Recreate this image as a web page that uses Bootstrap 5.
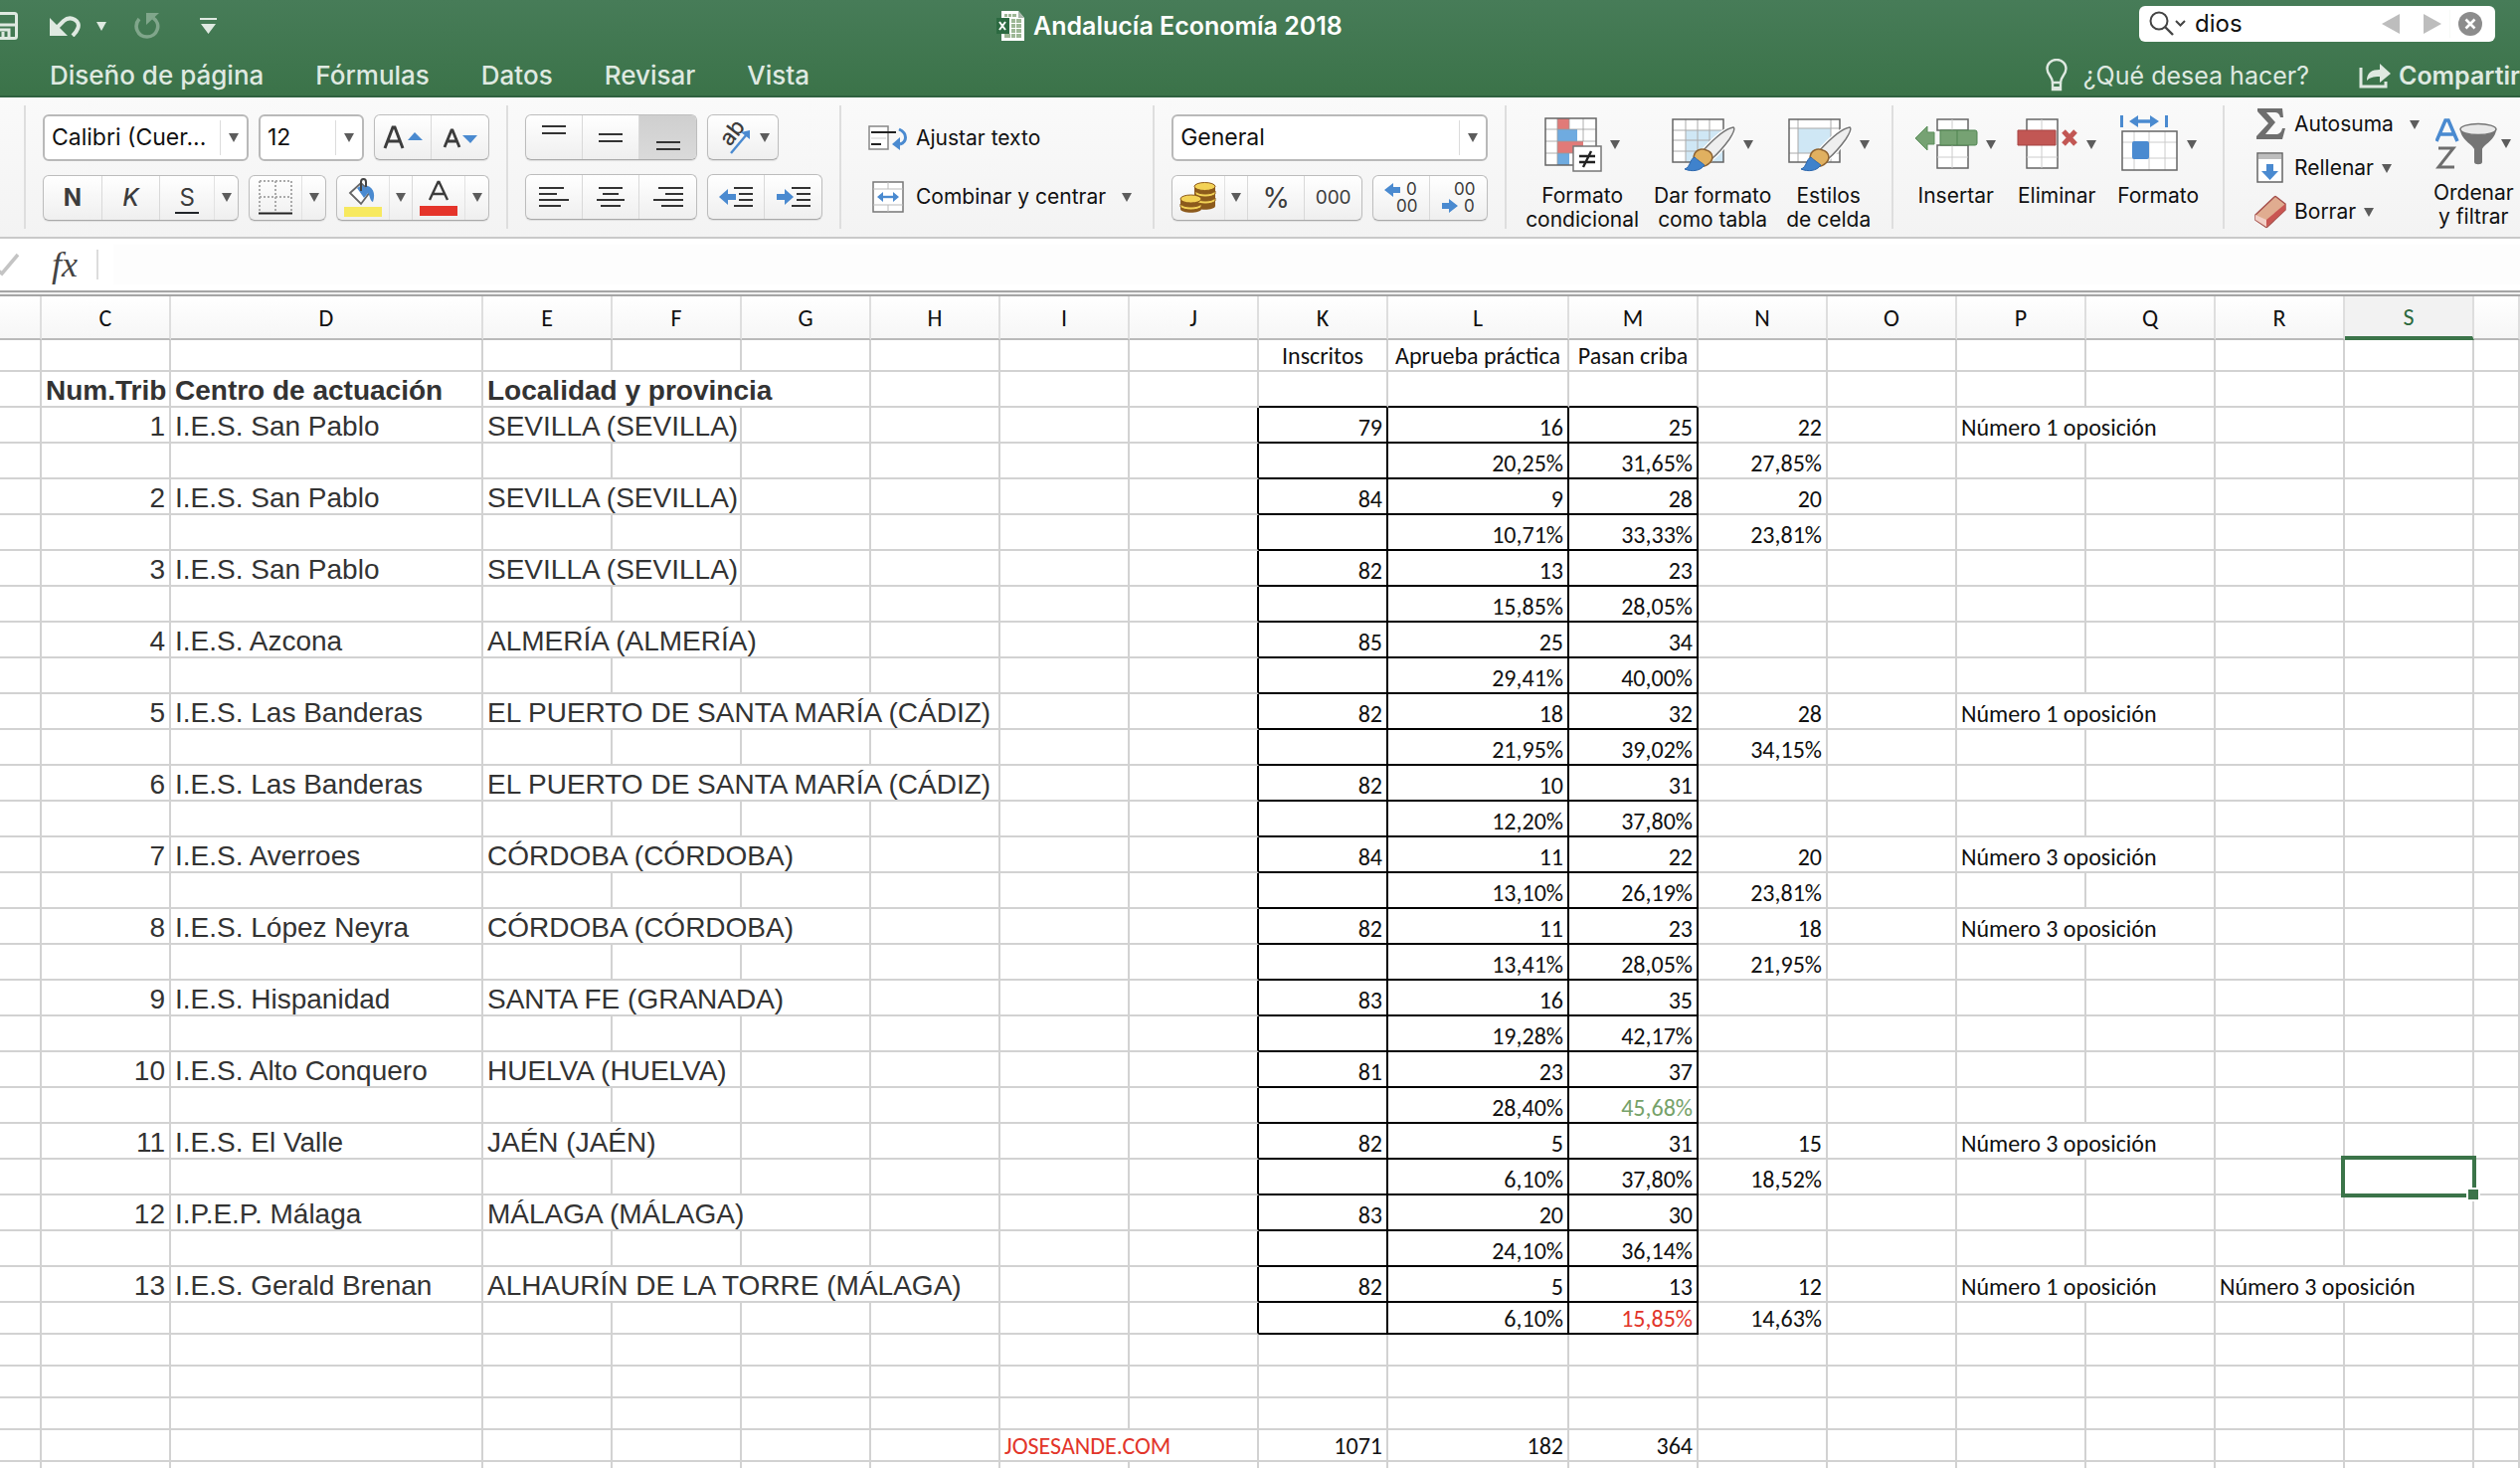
<!DOCTYPE html>
<html lang="es">
<head>
<meta charset="utf-8">
<meta name="viewport" content="width=device-width, initial-scale=1">
<title>Andalucía Economía 2018</title>
<link href="https://cdn.jsdelivr.net/npm/bootstrap@5.3.0/dist/css/bootstrap.min.css" rel="stylesheet">
<style>
:root{--ui:Inter,"Liberation Sans",sans-serif;--cell:Carlito,Lato,"Open Sans",sans-serif;--green:#3b7449}
body{font-family:var(--ui);color:#111;background:#fff}
svg{display:block;flex:none}
.titlebar{background:linear-gradient(#477c58,#3b7349);border-bottom:2px solid #2f6140;color:#dfe9e1;height:98px}
.title-row{height:52px}
.side-l{flex:11 1 0}
.side-r{flex:13 1 0}
.doc-title{font-size:25px;font-weight:600;color:#fff;line-height:32px}
.icon-btn{background:none;border:0;padding:0;color:inherit;display:flex;align-items:center}
.save-icon{margin-left:-12px}
.tri{width:0;height:0;border:5px solid transparent;border-top:9px solid #5c5c5c;border-bottom:0;flex:none}
.tri-light{border-top-color:#dfe9e1}
.find-box{width:358px;height:36px;background:#fff;border-radius:6px;padding:0 13px 0 10px;margin-right:25px;margin-top:-4px}
.find-box input{width:100%;min-width:0;border:0;outline:0;padding:0;font-size:24px;line-height:30px;color:#111}
.tabs-row{padding:2px 0 0 50px;height:46px}
.tabs-row .nav-link{padding:0;color:#dfe9e1;font-size:26px;font-weight:500;line-height:36px}
.tell{font-size:25px;line-height:36px;color:#dfe9e1;text-decoration:none}
.share{font-weight:600;margin-left:50px}
.ribbon{background:linear-gradient(#fafafa,#f3f3f3);border-bottom:2px solid #c9c9c9;height:142px;padding:8px 0 8px 24px;overflow:hidden}
.rgroup{border-left:2px solid #dedede;padding:0 17px}
.rgroup-wrap{padding:2px 21px 0 27px}
.rgroup-cells{padding:8px 21px 0 19px;gap:15px}
.rgroup-ins{padding:8px 24px 0 22px;gap:21px}
.rgroup-edit{padding:2px 0 0 30px;gap:14px}
.stack{gap:14px}
.tool-row{gap:10px}
.box-select{background:#fff;border:2px solid #b9b9b9;border-radius:6px;height:47px;padding-left:7px}
.box-select select{appearance:none;border:0;background:none;padding:0;font-size:23px;line-height:30px;color:#111;width:100%;min-width:0;outline:0}
.box-select .drop{border-left:1px solid #dcdcdc;height:35px;width:27px;flex:none}
.w-font{width:207px}.w-size{width:106px}.w-num{width:318px}
.tgrp{background:linear-gradient(#fff,#efefef);border:1px solid #bdbdbd;border-bottom-color:#a9a9a9;border-radius:6px;height:46px;overflow:hidden;box-shadow:0 1px 1px #ddd}
.tgrp button{background:none;border:0;border-right:1px solid #d9d9d9;padding:0;width:57px;height:44px;font-size:24px;line-height:30px;color:#3c3c3c}
.tgrp button:last-child{border-right:0}
.tgrp .main{width:53px;border-right-color:#e2e2e2}
.tgrp .car{width:23px}
.tgrp .wide{width:70px}
.tgrp .pressed{background:linear-gradient(#cfcfcf,#dadada)}
.zeros{font-size:19px!important}
.percent{font-size:28px!important}
.line-btn{background:none;border:0;padding:0;font-size:21px;line-height:30px;color:#111;white-space:nowrap}
.line-btn .ic{width:32px;height:34px}
.big-btn{background:none;border:0;padding:0;color:#111;font-size:21px;line-height:24px;white-space:nowrap}
.big-btn .pic{height:62px;margin-bottom:9px}
.fbar{height:52px;padding:4px 0 4px 0}
.fbar .fx{font-family:"Liberation Serif",serif;font-style:italic;font-size:36px;line-height:36px;color:#444}
.fbar .fx-sep{width:2px;height:30px;background:#dcdcdc;margin:0 15px}
.fbar input{border:0;outline:0;background:#fdfdfd;height:40px;font-size:23px}
.splitter{height:6px;border-top:2px solid #a5a5a5;border-bottom:2px solid #a5a5a5;background:#f0f0f0}
.sheet-area{min-height:0}
.sheet-grid{table-layout:fixed;width:100%;border-collapse:separate;border-spacing:0}
.sheet-grid th{height:44px;font:400 24px/29px var(--cell);text-align:center;vertical-align:middle;padding:1px 0 0;background:linear-gradient(#fff,#f6f6f6);border-right:2px solid #dedede;border-bottom:2px solid #b9b9b9;color:#111}
.sheet-grid th.picked{background:#f2f2f2;color:#2c6a3d;border-bottom:4px solid var(--green)}
.sheet-grid td{height:36px;font:400 24px/28px var(--cell);color:#111;padding:0 4px;vertical-align:bottom;border-right:2px solid #d2d2d2;border-bottom:2px solid #d2d2d2;white-space:nowrap}
.sheet-grid .low td{height:32px}
.sheet-grid .helv{font:400 28px/30px "Liberation Sans",Arial,sans-serif;color:#333}
.sheet-grid .helv.strong{font-weight:700;padding-right:0}
.sheet-grid .r{text-align:right}
.sheet-grid .c{text-align:center}
.sheet-grid .line-r{border-right-color:#000}
.sheet-grid .line-b{border-bottom-color:#000}
.sheet-grid .good{color:#76a269}
.sheet-grid .bad{color:#e2352a}
.col-tail{width:auto}
.cursor-frame{position:absolute;inset:-4px;border:4px solid var(--green)}
.cursor-frame::after{content:"";position:absolute;right:-8px;bottom:-8px;width:14px;height:14px;background:var(--green);border:2px solid #fff}
</style>
<script src="https://cdn.jsdelivr.net/npm/bootstrap@5.3.0/dist/js/bootstrap.bundle.min.js"></script>
</head>
<body class="vh-100 d-flex flex-column overflow-hidden">

<header class="titlebar flex-shrink-0">
  <div class="title-row d-flex align-items-center">
    <div class="side-l d-flex align-items-center">
      <button class="icon-btn save-icon" aria-label="Guardar"><svg width="30" height="28" viewBox="0 0 30 28" fill="none" stroke="#dfe9e1" stroke-width="3"><rect x="1.500" y="1.500" width="27" height="25" rx="2"/><path d="M6 2v11h22M8 26v-8h13v8M15 20v6"/></svg></button>
      <button class="icon-btn ms-4 ps-2" aria-label="Deshacer"><svg width="31" height="22" viewBox="0 0 31 22"><path d="M0 3v18h18z" fill="#dfe9e1"/><path d="M7 13 14 6C21 0 32 6 28 14c-1 3-3 5-5 7" fill="none" stroke="#dfe9e1" stroke-width="4"/></svg></button>
      <button class="icon-btn ms-3" aria-label="Opciones de deshacer"><span class="tri tri-light"></span></button>
      <button class="icon-btn ms-4 ps-1" aria-label="Rehacer"><svg width="26" height="28" viewBox="0 0 26 28"><path d="M5 7C-1 14 3 25 13 25s15-13 6-19" fill="none" stroke="#80a68b" stroke-width="3.600"/><path d="M12 1h13L12 13z" fill="#80a68b"/></svg></button>
      <button class="icon-btn ms-4 ps-3" aria-label="Personalizar"><svg width="17" height="16" viewBox="0 0 17 16" fill="#dfe9e1"><path d="M0 0h17v2H0zM1 6h15L8.500 16z"/></svg></button>
    </div>
    <div class="d-flex align-items-center gap-2 doc-title">
      <svg width="29" height="30" viewBox="0 0 29 30"><path d="M5 0h17l6 7v23H5z" fill="#fff"/><path d="M22 0v7h6z" fill="#a9b7ab"/><g fill="#9db795"><path d="M12 3h3v3h-3zM16 3h4v3h-4zM15 8h4v4h-4zM20 8h5v4h-5zM15 13h4v4h-4zM20 13h5v4h-5zM15 18h4v4h-4zM20 18h5v4h-5zM15 23h4v4h-4zM20 23h5v4h-5zM8 23h6v4H8zM8 3h3v3H8z"/></g><path d="M0 7h13v16H0z" fill="#2c6a41"/><path d="M3 11l6 8M9 11l-6 8" stroke="#fff" stroke-width="2"/></svg>
      <span>Andalucía Economía 2018</span>
    </div>
    <div class="side-r d-flex justify-content-end">
      <div class="find-box d-flex align-items-center">
        <svg width="38" height="26" viewBox="0 0 38 26" fill="none" stroke="#444" stroke-width="2"><circle cx="10" cy="10" r="8.500"/><path d="M16 16l8 8" stroke-width="2.400"/><path d="M27 10l4.500 4.500L36 10"/></svg>
        <input class="ms-2" id="find" type="text" value="dios" aria-label="Buscar en la hoja">
        <button class="icon-btn" aria-label="Anterior"><svg width="18" height="20" viewBox="0 0 18 20"><path d="M18 0v20L0 10z" fill="#bdbdbd"/></svg></button>
        <button class="icon-btn ms-4" aria-label="Siguiente"><svg width="18" height="20" viewBox="0 0 18 20"><path d="M0 0v20l18-10z" fill="#bdbdbd"/></svg></button>
        <div class="vr ms-2 me-2 my-1 align-self-stretch"></div>
        <button class="icon-btn" aria-label="Borrar búsqueda"><svg width="24" height="24" viewBox="0 0 24 24"><circle cx="12" cy="12" r="12" fill="#8c8c8c"/><path d="M7.500 7.500l9 9M16.500 7.500l-9 9" stroke="#fff" stroke-width="2.600"/></svg></button>
      </div>
    </div>
  </div>
  <div class="tabs-row d-flex align-items-center">
    <nav class="nav gap-5 flex-nowrap flex-grow-1">
      <a class="nav-link me-1" href="#">Diseño de página</a>
      <a class="nav-link me-1" href="#">Fórmulas</a>
      <a class="nav-link me-1" href="#">Datos</a>
      <a class="nav-link me-1" href="#">Revisar</a>
      <a class="nav-link" href="#">Vista</a>
    </nav>
    <a class="tell d-flex align-items-center gap-3 text-nowrap" href="#"><svg width="22" height="34" viewBox="0 0 22 34" fill="none" stroke="#dfe9e1" stroke-width="2.400"><path d="M7 24C7 18 1.500 16 1.500 10a9.500 9 0 0119 0c0 6-5.500 8-5.500 14z"/><path d="M7 24v7h8v-7" /><path d="M7 28h8v4H7z" fill="#dfe9e1" stroke="none"/></svg>¿Qué desea hacer?</a>
    <a class="tell share d-flex align-items-center gap-2 text-nowrap" href="#"><svg width="32" height="26" viewBox="0 0 32 26"><path d="M2 5v19h25v-5" fill="none" stroke="#dfe9e1" stroke-width="3"/><path d="M8 18c0-8 5-11 13-11V1l11 10-11 9v-6c-7 0-10 1-13 4z" fill="#dfe9e1"/></svg>Compartir</a>
  </div>
</header>

<section class="ribbon d-flex flex-shrink-0" aria-label="Cinta Inicio">
  <div class="rgroup flex-shrink-0 d-flex flex-column justify-content-center stack">
    <div class="d-flex tool-row">
      <div class="box-select w-font d-flex align-items-center"><select aria-label="Fuente"><option>Calibri (Cuer...</option></select><span class="drop d-flex align-items-center justify-content-center"><span class="tri"></span></span></div>
      <div class="box-select w-size d-flex align-items-center"><select aria-label="Tamaño"><option>12</option></select><span class="drop d-flex align-items-center justify-content-center"><span class="tri"></span></span></div>
      <div class="tgrp d-flex">
        <button class="d-flex align-items-center justify-content-center" aria-label="Aumentar fuente"><svg width="40" height="24" viewBox="0 0 40 24"><path d="M2 23 10 2h2l8 21M5 16h12" fill="none" stroke="#3c3c3c" stroke-width="3"/><path d="M25 15l7-8 8 8z" fill="#4a8ad0"/></svg></button>
        <button class="d-flex align-items-center justify-content-center" aria-label="Reducir fuente"><svg width="36" height="24" viewBox="0 0 36 24"><path d="M2 22 9 5h1l7 17M5 16h9" fill="none" stroke="#3c3c3c" stroke-width="2.800"/><path d="M20 10h15l-7 8z" fill="#4a8ad0"/></svg></button>
      </div>
    </div>
    <div class="d-flex tool-row">
      <div class="tgrp d-flex flex-grow-1">
        <button class="fw-bold flex-grow-1" aria-label="Negrita">N</button>
        <button class="fst-italic fw-medium flex-grow-1" aria-label="Cursiva">K</button>
        <button class="main flex-grow-1" aria-label="Subrayado"><span class="border-bottom border-2 border-dark px-1">S</span></button>
        <button class="car d-flex align-items-center justify-content-center" aria-label="Más subrayados"><span class="tri"></span></button>
      </div>
      <div class="tgrp d-flex">
        <button class="main d-flex align-items-center justify-content-center" aria-label="Bordes"><svg width="34" height="35" viewBox="0 0 34 35"><path d="M1 1h32M1 1v30M33 1v30M17 1v30M1 17h32" stroke="#aaa" stroke-width="2" stroke-dasharray="2 2" fill="none"/><path d="M0 33.500h34" stroke="#222" stroke-width="2"/></svg></button>
        <button class="car d-flex align-items-center justify-content-center" aria-label="Más bordes"><span class="tri"></span></button>
      </div>
      <div class="tgrp d-flex">
        <button class="main d-flex align-items-center justify-content-center" aria-label="Color de relleno"><svg width="38" height="39" viewBox="0 0 38 39"><path d="M0 29h38v10H0z" fill="#f7e95f"/><path d="M6 15 17 5l9 9-9 12z" fill="#fff" stroke="#666" stroke-width="1.800"/><path d="M13 10 20 20l5-6-7-7z" fill="#4a8ad0"/><path d="M20 7c9 1 12 8 9 17-3-1-3-7-6-11" fill="#4a8ad0"/><path d="M17 13V4c0-4 5-4 5 0v5" fill="none" stroke="#444" stroke-width="2"/></svg></button>
        <button class="car d-flex align-items-center justify-content-center" aria-label="Más colores de relleno"><span class="tri"></span></button>
        <button class="main d-flex align-items-center justify-content-center" aria-label="Color de fuente"><svg width="38" height="36" viewBox="0 0 38 36"><path d="M0 26h38v10H0z" fill="#e5342a"/><path d="M10 20 18.500 2h1L28 20M13 14h12" fill="none" stroke="#3c3c3c" stroke-width="2.400"/></svg></button>
        <button class="car d-flex align-items-center justify-content-center" aria-label="Más colores de fuente"><span class="tri"></span></button>
      </div>
    </div>
  </div>

  <div class="rgroup flex-shrink-0 d-flex flex-column justify-content-center stack">
    <div class="d-flex tool-row">
      <div class="tgrp d-flex">
        <button class="d-flex justify-content-center align-items-center" aria-label="Alinear arriba"><svg width="24" height="32" viewBox="0 0 24 32"><path d="M0 5h24M0 12h24" stroke="#333" stroke-width="2"/></svg></button>
        <button class="d-flex justify-content-center align-items-center" aria-label="Centrar verticalmente"><svg width="24" height="32" viewBox="0 0 24 32"><path d="M0 13h24M0 20h24" stroke="#333" stroke-width="2"/></svg></button>
        <button class="pressed d-flex justify-content-center align-items-center" aria-label="Alinear abajo"><svg width="24" height="32" viewBox="0 0 24 32"><path d="M0 21h24M0 28h24" stroke="#333" stroke-width="2"/></svg></button>
      </div>
      <div class="tgrp d-flex">
        <button class="wide d-flex align-items-center justify-content-center gap-2" aria-label="Orientación"><svg width="36" height="34" viewBox="0 0 36 34"><text x="0" y="0" transform="translate(14 27) rotate(-52)" font-family="Inter" font-size="22" font-weight="500" fill="#3c3c3c">ab</text><path d="M15 33 31 14" stroke="#4a8ad0" stroke-width="2.400"/><path d="M34 10v9l-9-7z" fill="#4a8ad0"/></svg><span class="tri"></span></button>
      </div>
    </div>
    <div class="d-flex tool-row">
      <div class="tgrp d-flex">
        <button class="d-flex justify-content-center align-items-center" aria-label="Alinear a la izquierda"><svg width="30" height="22" viewBox="0 0 30 22"><path d="M0 2h25M0 8h18M0 14h30M0 20h22" stroke="#333" stroke-width="2"/></svg></button>
        <button class="d-flex justify-content-center align-items-center" aria-label="Centrar"><svg width="28" height="22" viewBox="0 0 28 22"><path d="M2 2h24M6 8h16M0 14h28M4 20h20" stroke="#333" stroke-width="2"/></svg></button>
        <button class="d-flex justify-content-center align-items-center" aria-label="Alinear a la derecha"><svg width="30" height="22" viewBox="0 0 30 22"><path d="M5 2h25M12 8h18M0 14h30M8 20h22" stroke="#333" stroke-width="2"/></svg></button>
      </div>
      <div class="tgrp d-flex">
        <button class="d-flex justify-content-center align-items-center" aria-label="Disminuir sangría"><svg width="34" height="22" viewBox="0 0 34 22"><path d="M15 2h19M20 8h14M20 14h14M15 20h19" stroke="#333" stroke-width="2"/><path d="M0 11 9 3v5h8v6H9v5z" fill="#4a8ad0"/></svg></button>
        <button class="d-flex justify-content-center align-items-center" aria-label="Aumentar sangría"><svg width="34" height="22" viewBox="0 0 34 22"><path d="M15 2h19M20 8h14M20 14h14M15 20h19" stroke="#333" stroke-width="2"/><path d="M17 11 8 3v5H0v6h8v5z" fill="#4a8ad0"/></svg></button>
      </div>
    </div>
  </div>

  <div class="rgroup rgroup-wrap flex-shrink-0 d-flex flex-column justify-content-center align-items-start">
    <button class="line-btn d-flex align-items-center mb-4"><svg width="40" height="26" viewBox="0 0 40 26"><path d="M1 1h19v23H1z" fill="#fff" stroke="#888" stroke-width="1.500"/><path d="M3 7h25M3 19h10" stroke="#222" stroke-width="2"/><path d="M3 13h15" stroke="#ccc"/><path d="M31 4c9 4 8 13 1 15" fill="none" stroke="#4a8ad0" stroke-width="3"/><path d="M24 19l8-7v13z" fill="#4a8ad0"/></svg><span class="ps-2">Ajustar texto</span></button>
    <button class="line-btn d-flex align-items-center mt-1"><svg class="mx-1" width="32" height="32" viewBox="0 0 32 32"><path d="M1 1h30v30H1z" fill="#fff" stroke="#777" stroke-width="1.500"/><path d="M1 8h30M1 24h30M16 1v7M16 24v7" stroke="#bbb"/><path d="M9 16h14" stroke="#4a8ad0" stroke-width="2.400"/><path d="M5 16l6-5v10zM27 16l-6-5v10z" fill="#4a8ad0"/></svg><span class="ps-2">Combinar y centrar</span><span class="tri ms-3"></span></button>
  </div>

  <div class="rgroup flex-shrink-0 d-flex flex-column justify-content-center stack">
    <div class="box-select w-num d-flex align-items-center"><select aria-label="Formato de número"><option>General</option></select><span class="drop d-flex align-items-center justify-content-center"><span class="tri"></span></span></div>
    <div class="d-flex tool-row">
      <div class="tgrp d-flex">
        <button class="main d-flex justify-content-center align-items-center" aria-label="Moneda"><svg width="38" height="32" viewBox="0 0 38 32"><g fill="#8c5a1c"><path d="M15 4v20c0 5 21 5 21 0V4z"/><path d="M1 16v11c0 5 21 5 21 0V16z"/></g><g fill="#f3d256" stroke="#8c5a1c" stroke-width="1"><path d="M16 19c3 4 17 4 20 0v-3c-3 4-17 4-20 0zM16 12c3 4 17 4 20 0V9c-3 4-17 4-20 0z"/><ellipse cx="25.500" cy="4.500" rx="10.500" ry="4"/><path d="M1 25c3 4 18 4 21 0v-3c-3 4-18 4-21 0z"/><ellipse cx="11.500" cy="17" rx="10.500" ry="4"/></g></svg></button>
        <button class="car d-flex align-items-center justify-content-center" aria-label="Más monedas"><span class="tri"></span></button>
        <button class="percent" aria-label="Porcentaje">%</button>
        <button class="zeros" aria-label="Millares">000</button>
      </div>
      <div class="tgrp d-flex">
        <button aria-label="Aumentar decimales" class="d-flex justify-content-center align-items-center"><svg width="34" height="36" viewBox="0 0 34 36" font-family="Inter" font-size="17" fill="#3c3c3c"><path d="M0 10 9 3v4h7v6H9v4z" fill="#4a8ad0"/><text x="22" y="15">0</text><text x="12" y="32">00</text></svg></button>
        <button aria-label="Disminuir decimales" class="d-flex justify-content-center align-items-center"><svg width="34" height="36" viewBox="0 0 34 36" font-family="Inter" font-size="17" fill="#3c3c3c"><path d="M16 26 7 19v4H0v6h7v4z" fill="#4a8ad0"/><text x="12" y="15">00</text><text x="22" y="32">0</text></svg></button>
      </div>
    </div>
  </div>

  <div class="rgroup rgroup-cells flex-shrink-0 d-flex align-items-start">
    <button class="big-btn d-flex flex-column align-items-center">
      <span class="pic d-flex align-items-center"><svg width="58" height="56" viewBox="0 0 58 56"><path d="M1 2h51v47H1z" fill="#fff"/><path d="M13 2h12v11H13z" fill="#e17a78"/><path d="M13 13h20v12H13z" fill="#6fabe0"/><path d="M13 25h26v12H13z" fill="#e17a78"/><path d="M13 37h12v12H13z" fill="#6fabe0"/><path d="M1 13h51M1 25h51M1 37h51M13 2v47M39 2v23M25 2v11" stroke="#999" stroke-width=".8"/><path d="M1 2h51v47H1z" fill="none" stroke="#666" stroke-width="1.500"/><path d="M29 30h28v25H29z" fill="#fff" stroke="#777" stroke-width="1.500"/><path d="M35 40h16M35 46h16M47 35l-8 16" stroke="#222" stroke-width="2.400"/></svg><span class="tri ms-2"></span></span>
      <span>Formato<br>condicional</span></button>
    <button class="big-btn d-flex flex-column align-items-center">
      <span class="pic d-flex align-items-center"><svg width="64" height="56" viewBox="0 0 64 56"><path d="M1 3h51v43H1z" fill="#fff"/><path d="M14 14h38v32H14z" fill="#cfe7f5"/><path d="M1 14h51M1 24h51M1 35h51M14 3v43M26 3v43M38 3v43" stroke="#aaa" stroke-width="1"/><path d="M1 3h51v43H1z" fill="none" stroke="#666" stroke-width="1.500"/><path d="M31 35C42 23 54 12 62 11c2 1 0 6-4 12-5 7-11 14-18 20z" fill="#eee" stroke="#fff" stroke-width="4"/><path d="M31 35C42 23 54 12 62 11c2 1 0 6-4 12-5 7-11 14-18 20z" fill="#eee" stroke="#777" stroke-width="1.500"/><path d="M22 43c0-10 8-11 13-9 6 2 8 8 3 13-4 4-10 4-16 0z" fill="#e0b060" stroke="#8f6330" stroke-width="1.500"/><path d="M13 53c6-2 5-10 10-12 3 3 9 7 10 8-4 6-13 7-20 4z" fill="#3f82cc" stroke="#2c67ad"/></svg><span class="tri ms-2"></span></span>
      <span>Dar formato<br>como tabla</span></button>
    <button class="big-btn d-flex flex-column align-items-center">
      <span class="pic d-flex align-items-center"><svg width="64" height="56" viewBox="0 0 64 56"><path d="M1 3h51v43H1z" fill="#fff"/><path d="M10 12h33v25H10z" fill="#cfe7f5"/><path d="M1 12h51M1 37h51M10 3v43M43 3v43" stroke="#aaa" stroke-width="1"/><path d="M1 3h51v43H1z" fill="none" stroke="#666" stroke-width="1.500"/><path d="M31 35C42 23 54 12 62 11c2 1 0 6-4 12-5 7-11 14-18 20z" fill="#eee" stroke="#fff" stroke-width="4"/><path d="M31 35C42 23 54 12 62 11c2 1 0 6-4 12-5 7-11 14-18 20z" fill="#eee" stroke="#777" stroke-width="1.500"/><path d="M22 43c0-10 8-11 13-9 6 2 8 8 3 13-4 4-10 4-16 0z" fill="#e0b060" stroke="#8f6330" stroke-width="1.500"/><path d="M13 53c6-2 5-10 10-12 3 3 9 7 10 8-4 6-13 7-20 4z" fill="#3f82cc" stroke="#2c67ad"/></svg><span class="tri ms-2"></span></span>
      <span>Estilos<br>de celda</span></button>
  </div>

  <div class="rgroup rgroup-ins flex-shrink-0 d-flex align-items-start">
    <button class="big-btn d-flex flex-column align-items-center">
      <span class="pic d-flex align-items-center"><svg width="63" height="56" viewBox="0 0 63 56"><path d="M22 3h31v11H22zM22 29h31v23H22z" fill="#fff" stroke="#666" stroke-width="1.500"/><path d="M37 3v49M22 41h31" stroke="#ccc"/><path d="M25 14h35q2 0 2 2v11q0 2-2 2H25z" fill="#76a273" stroke="#4e8450"/><path d="M42 14v15" stroke="#4e8450"/><path d="M0 22 12 10v6h7v12h-7v6z" fill="#76a273" stroke="#5d8f5c"/></svg><span class="tri ms-2"></span></span>
      <span>Insertar</span></button>
    <button class="big-btn d-flex flex-column align-items-center">
      <span class="pic d-flex align-items-center"><svg width="62" height="56" viewBox="0 0 62 56"><path d="M10 3h31v49H10z" fill="#fff" stroke="#666" stroke-width="1.500"/><path d="M25 3v49M10 41h31" stroke="#ccc"/><path d="M1 14h38v15H1z" fill="#c25754" stroke="#a54543"/><path d="M47 15l12 13M59 15l-12 13" stroke="#c25754" stroke-width="5"/></svg><span class="tri ms-2"></span></span>
      <span>Eliminar</span></button>
    <button class="big-btn d-flex flex-column align-items-center">
      <span class="pic d-flex align-items-center"><svg width="59" height="60" viewBox="0 0 59 60"><path d="M1.500 1v12M46.500 1v12" stroke="#4a8ad0" stroke-width="3"/><path d="M14 7h20" stroke="#4a8ad0" stroke-width="3.500"/><path d="M9 7l9-6v12zM39 7l-9-6v12z" fill="#4a8ad0"/><path d="M2 17h55v39H2z" fill="#fff"/><path d="M2 28h55M2 44h55M14 17v39M29 17v39M45 17v39" stroke="#ccc"/><path d="M2 17h55v39H2z" fill="none" stroke="#666" stroke-width="1.500"/><rect x="12" y="27" width="17" height="18" rx="2" fill="#4a8ad0"/></svg><span class="tri ms-2"></span></span>
      <span>Formato</span></button>
  </div>

  <div class="rgroup rgroup-edit flex-shrink-0 d-flex align-items-stretch">
    <div class="d-flex flex-column justify-content-between align-items-start">
      <button class="line-btn d-flex align-items-center gap-2"><svg class="ic" width="32" height="34" viewBox="0 0 32 34"><path d="M3 1h25l1 9h-3c-1-4-3-5-6-5h-8l9 10-10 12h10c4 0 6-2 7-6h3l-3 11H2v-3l12-13L3 4z" fill="#6e6e6e"/></svg><span>Autosuma</span><span class="tri ms-2"></span></button>
      <button class="line-btn d-flex align-items-center gap-2"><svg class="ic" width="32" height="34" viewBox="0 0 32 34"><path d="M3 2h25v29H3z" fill="#fff" stroke="#666" stroke-width="1.500"/><path d="M4 3h23v5H4z" fill="#bdbdbd"/><path d="M12 13h7v7h5l-8.500 9L7 20h5z" fill="#4a8ad0"/></svg><span>Rellenar</span><span class="tri"></span></button>
      <button class="line-btn d-flex align-items-center gap-2"><svg class="ic" width="32" height="34" viewBox="0 0 32 34"><path d="M1 20 20 2q1-1 2 0l9 7v6L13 32q-1 1-2 0L1 25z" fill="#e0ac90" stroke="#a5504c" stroke-width="1.500"/><path d="M12 32 31 15V9L12 25z" fill="#c95552"/><path d="M1 20l11 5v7L1 25z" fill="#f1cfc6"/></svg><span>Borrar</span><span class="tri"></span></button>
    </div>
    <button class="big-btn d-flex flex-column align-items-center pt-2">
      <span class="pic d-flex align-items-center"><svg width="62" height="52" viewBox="0 0 62 52"><path d="M1 23 10 2h3l9 21M5 16h13" fill="none" stroke="#4a8ad0" stroke-width="3.500"/><path d="M3 30h15L3 49h16" fill="none" stroke="#6e6e6e" stroke-width="3"/><path d="M25 11c0 10 13 16 14 20v13c0 3 8 3 8 0V31c1-4 14-10 14-20z" fill="#757575"/><ellipse cx="43" cy="11" rx="18" ry="5.500" fill="#e9e9e9" stroke="#757575" stroke-width="1.500"/></svg><span class="tri ms-1"></span></span>
      <span>Ordenar<br>y filtrar</span></button>
  </div>
</section>

<section class="fbar d-flex align-items-center flex-shrink-0" aria-label="Barra de fórmulas">
  <svg width="20" height="24" viewBox="0 0 20 24"><path d="M-8 13 2 21 18 2" fill="none" stroke="#c4c4c4" stroke-width="3.500"/></svg>
  <label class="fx ps-4 ms-2 me-1" for="formula">fx</label>
  <span class="fx-sep"></span>
  <input class="flex-grow-1" id="formula" type="text">
</section>
<div class="splitter flex-shrink-0"></div>

<main class="sheet-area flex-grow-1 overflow-hidden">
  <table class="sheet-grid" id="grid">
    <colgroup>
      <col style="width:42px"><col style="width:130px"><col style="width:314px"><col style="width:130px"><col style="width:130px"><col style="width:130px"><col style="width:130px"><col style="width:130px"><col style="width:130px"><col style="width:130px"><col style="width:182px"><col style="width:130px"><col style="width:130px"><col style="width:130px"><col style="width:130px"><col style="width:130px"><col style="width:130px"><col style="width:130px"><col class="col-tail">
    </colgroup>
    <thead><tr id="letters"></tr></thead>
    <tbody id="rows"></tbody>
  </table>
</main>

<script>
// Columns on view: B (partly hidden) to T (partly hidden)
const letters = ['', 'C','D','E','F','G','H','I','J','K','L','M','N','O','P','Q','R','S',''];
const head = document.getElementById('letters');
letters.forEach(l => {
  const th = document.createElement('th');
  th.scope = 'col'; th.textContent = l;
  if (l === 'S') th.className = 'picked';
  head.append(th);
});

// cell: [column index, text, classes, columns that the text runs over]
const C=1, D=2, E=3, I=7, K=9, L=10, M=11, N=12, P=14, R=16, S=17;
const courts = [
  ['I.E.S. San Pablo','SEVILLA (SEVILLA)',2,79,16,25,22,'20,25%','31,65%','27,85%','Número 1 oposición'],
  ['I.E.S. San Pablo','SEVILLA (SEVILLA)',2,84,9,28,20,'10,71%','33,33%','23,81%'],
  ['I.E.S. San Pablo','SEVILLA (SEVILLA)',2,82,13,23,'','15,85%','28,05%',''],
  ['I.E.S. Azcona','ALMERÍA (ALMERÍA)',3,85,25,34,'','29,41%','40,00%',''],
  ['I.E.S. Las Banderas','EL PUERTO DE SANTA MARÍA (CÁDIZ)',4,82,18,32,28,'21,95%','39,02%','34,15%','Número 1 oposición'],
  ['I.E.S. Las Banderas','EL PUERTO DE SANTA MARÍA (CÁDIZ)',4,82,10,31,'','12,20%','37,80%',''],
  ['I.E.S. Averroes','CÓRDOBA (CÓRDOBA)',3,84,11,22,20,'13,10%','26,19%','23,81%','Número 3 oposición'],
  ['I.E.S. López Neyra','CÓRDOBA (CÓRDOBA)',3,82,11,23,18,'13,41%','28,05%','21,95%','Número 3 oposición'],
  ['I.E.S. Hispanidad','SANTA FE (GRANADA)',3,83,16,35,'','19,28%','42,17%',''],
  ['I.E.S. Alto Conquero','HUELVA (HUELVA)',2,81,23,37,'','28,40%','45,68%',''],
  ['I.E.S. El Valle','JAÉN (JAÉN)',2,82,5,31,15,'6,10%','37,80%','18,52%','Número 3 oposición'],
  ['I.P.E.P. Málaga','MÁLAGA (MÁLAGA)',3,83,20,30,'','24,10%','36,14%',''],
  ['I.E.S. Gerald Brenan','ALHAURÍN DE LA TORRE (MÁLAGA)',4,82,5,13,12,'6,10%','15,85%','14,63%','Número 1 oposición','Número 3 oposición']
];
const body = document.getElementById('rows');
function addRow(cells, opts = {}) {
  const tr = document.createElement('tr');
  if (opts.low) tr.className = 'low';
  for (let i = 0; i < letters.length;) {
    const cell = cells.find(c => c[0] === i) || [i, '', '', 1];
    const span = cell[3] || 1, td = document.createElement('td');
    td.textContent = cell[1];
    if (cell[2]) td.className = cell[2];
    if (span > 1) td.colSpan = span;
    if (i >= K && i <= M && (opts.boxed || opts.above)) td.classList.add('line-b');
    if (opts.boxed && i >= K - 1 && i <= M) td.classList.add('line-r');
    if (opts.cursor && i === S) {
      td.classList.add('position-relative');
      const f = document.createElement('div'); f.className = 'cursor-frame'; td.append(f);
    }
    tr.append(td); i += span;
  }
  body.append(tr);
}
addRow([[K,'Inscritos','c'],[L,'Aprueba práctica','c'],[M,'Pasan criba','c']], {low:true});
addRow([[C,'Num.Trib','helv strong'],[D,'Centro de actuación','helv strong'],[E,'Localidad y provincia','helv strong',3]], {above:true});
courts.forEach((t, n) => {
  const row = [[C,n+1,'helv r'],[D,t[0],'helv'],[E,t[1],'helv',t[2]],[K,t[3],'r'],[L,t[4],'r'],[M,t[5],'r'],[N,t[6],'r']];
  if (t[10]) row.push([P,t[10],'',2]);
  if (t[11]) row.push([R,t[11],'',2]);
  addRow(row, {boxed:true});
  const tone = t[8] === '45,68%' ? ' good' : n === 12 ? ' bad' : '';
  addRow([[L,t[7],'r'],[M,t[8],'r'+tone],[N,t[9],'r']], {boxed:true, cursor:n===10, low:n===12});
});
for (let i = 0; i < 3; i++) addRow([], {low:true});
addRow([[I,'JOSESANDE.COM','bad',2],[K,1071,'r'],[L,182,'r'],[M,364,'r']], {low:true});
addRow([], {low:true});
</script>
</body>
</html>
